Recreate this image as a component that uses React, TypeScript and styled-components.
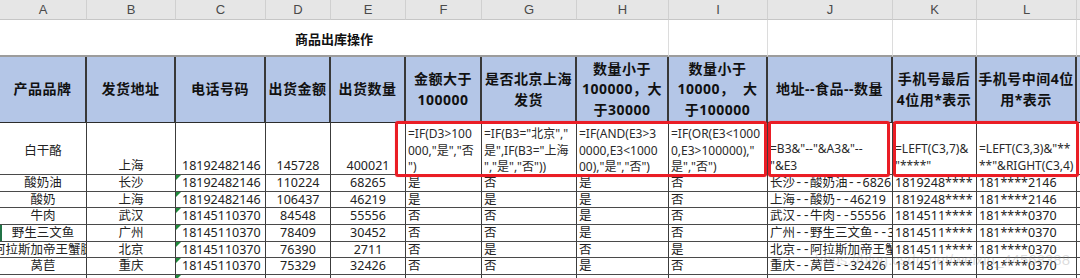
import React from 'react';
import styled, { createGlobalStyle } from 'styled-components';

const COLUMN_WIDTHS = [87, 89, 90, 65, 75, 76, 95, 92, 99, 125, 84, 100];
const COLUMN_NAMES = ['A', 'B', 'C', 'D', 'E', 'F', 'G', 'H', 'I', 'J', 'K', 'L'];

const FONT = `"Noto Sans", "Noto Sans CJK SC", sans-serif`;

type Align = 'left' | 'center';
type VAlign = 'top' | 'center' | 'bottom';

const HEADERS: string[][] = [
  ['产品品牌'],
  ['发货地址'],
  ['电话号码'],
  ['出货金额'],
  ['出货数量'],
  ['金额大于', '100000'],
  ['是否北京上海', '发货'],
  ['数量小于', '100000，大', '于30000'],
  ['数量小于', '10000，  大', '于100000'],
  ['地址--食品--数量'],
  ['手机号最后', '4位用*表示'],
  ['手机号中间4位', '用*表示'],
];

const FORMULAS: string[][] = [
  ['=IF(D3>100', '000,"是","否', '")'],
  ['=IF(B3="北京","', '是",IF(B3="上海', '","是","否"))'],
  ['=IF(AND(E3>3', '0000,E3<1000', '00),"是","否")'],
  ['=IF(OR(E3<1000', '0,E3>100000),"', '是","否")'],
  ['=B3&"--"&A3&"--', '"&E3'],
  ['=LEFT(C3,7)&', '"****"'],
  ['=LEFT(C3,3)&"**', '**"&RIGHT(C3,4)'],
];

type Item = {
  name: string;
  city: string;
  phone: string;
  amount: string;
  qty: string;
  flags: string[];
};

const ITEMS: Item[] = [
  { name: '酸奶油', city: '长沙', phone: '18192482146', amount: '110224', qty: '68265', flags: ['是', '否', '是', '否'] },
  { name: '酸奶', city: '上海', phone: '18192482146', amount: '106437', qty: '46219', flags: ['是', '是', '是', '否'] },
  { name: '牛肉', city: '武汉', phone: '18145110370', amount: '84548', qty: '55556', flags: ['否', '否', '是', '否'] },
  { name: '野生三文鱼', city: '广州', phone: '18145110370', amount: '78409', qty: '30452', flags: ['否', '否', '是', '否'] },
  { name: '阿拉斯加帝王蟹腿', city: '北京', phone: '18145110370', amount: '76390', qty: '2711', flags: ['否', '是', '否', '是'] },
  { name: '莴苣', city: '重庆', phone: '18145110370', amount: '75329', qty: '32426', flags: ['否', '否', '是', '否'] },
];

export default function App() {
  return (
    <>
      <GlobalStyle />
      <Sheet>
        {COLUMN_NAMES.map((c) => (
          <ColHead key={c}>{c}</ColHead>
        ))}
        <ColHead />

        <TitleCell>商品出库操作</TitleCell>
        {[0, 1, 2, 3].map((i) => (
          <TitleBlank key={i} />
        ))}
        <TitleBlank $last />

        {HEADERS.map((lines, i) => (
          <HeadCell key={i}>
            {lines.map((l, j) => (
              <HeadLine key={j}>{l}</HeadLine>
            ))}
          </HeadCell>
        ))}
        <HeadCell $last />

        <Cell $align="center" $valign="center" $padTop={5}>白干酪</Cell>
        <Cell $align="center" $valign="bottom">上海</Cell>
        <Cell $align="left" $valign="bottom" $pad={6}>18192482146</Cell>
        <Cell $align="center" $valign="bottom">145728</Cell>
        <Cell $align="center" $valign="bottom">400021</Cell>
        {FORMULAS.map((lines, i) => (
          <Cell key={i} $align="left" $valign={i < 4 ? 'top' : 'bottom'} $padTop={i < 4 ? 3 : 0}>
            <Formula>
              {lines.map((l, j) => (
                <FormulaLine key={j}>{l}</FormulaLine>
              ))}
            </Formula>
          </Cell>
        ))}
        <Cell $align="left" $valign="center" />

        {ITEMS.map((it, r) => (
          <React.Fragment key={r}>
            <Cell $align="center" $valign="center" $mark={r === 3}>{it.name}</Cell>
            <Cell $align="center" $valign="center">{it.city}</Cell>
            <Cell $align="left" $valign="center" $pad={6} $flag>{it.phone}</Cell>
            <Cell $align="center" $valign="center">{it.amount}</Cell>
            <Cell $align="center" $valign="center">{it.qty}</Cell>
            {it.flags.map((f, j) => (
              <Cell key={j} $align="left" $valign="center">{f}</Cell>
            ))}
            <Cell $align="left" $valign="center">
              {it.city}
              <Dash>--</Dash>
              {it.name}
              <Dash>--</Dash>
              {it.qty}
            </Cell>
            <Cell $align="left" $valign="center">{it.phone.slice(0, 7)}****</Cell>
            <Cell $align="left" $valign="center">
              {it.phone.slice(0, 3)}****{it.phone.slice(7)}
            </Cell>
            <Cell $align="left" $valign="center" />
          </React.Fragment>
        ))}

        {COLUMN_NAMES.map((c, i) => (
          <Cell key={c} $align="left" $valign="center" $flag={i === 2} />
        ))}
        <Cell $align="left" $valign="center" />

        <Highlight $col="6 / 10" $left={-11} $right={1} />
        <Highlight $col="10 / 11" $left={0} $right={3} />
        <Highlight $col="11 / 13" $left={0} $right={-2} />

        <Watermark>https://blog.csdn.net/weixin_44568388</Watermark>
      </Sheet>
    </>
  );
}

const GlobalStyle = createGlobalStyle`
  html, body {
    margin: 0;
    padding: 0;
    background: #ffffff;
    overflow: hidden;
  }
`;

const Sheet = styled.div`
  position: relative;
  display: grid;
  grid-template-columns: ${COLUMN_WIDTHS.map((w) => `${w}px`).join(' ')} 1fr;
  grid-template-rows: 20px 37px 66px 52px repeat(7, 16.7px);
  width: 1080px;
  height: 278px;
  overflow: hidden;
  font-family: ${FONT};
  color: #222;
`;

const ColHead = styled.div`
  display: flex;
  align-items: center;
  justify-content: center;
  background: #e6e6e6;
  color: #4a4a4a;
  font: 13px "Liberation Sans", sans-serif;
  border-right: 1px solid #d0d0d0;
  border-bottom: 1px solid #c6c6c6;
`;

const TitleCell = styled.div`
  grid-column: span 8;
  display: flex;
  align-items: center;
  justify-content: center;
  padding-top: 1px;
  font-size: 13px;
  font-weight: 700;
  color: #111;
  border-right: 1px solid #dcdcdc;
  border-bottom: 2px solid #9c9c9c;
`;

const TitleBlank = styled.div<{ $last?: boolean }>`
  border-right: ${({ $last }) => ($last ? 'none' : '1px solid #dcdcdc')};
  border-bottom: 2px solid #9c9c9c;
`;

const HeadCell = styled.div<{ $last?: boolean }>`
  display: flex;
  flex-direction: column;
  align-items: center;
  justify-content: center;
  background: #b4c6e7;
  border-right: ${({ $last }) => ($last ? 'none' : '2px solid #383838')};
  border-bottom: 1px solid #2c2c2c;
  font-size: 14px;
  font-weight: 700;
  letter-spacing: 0.5px;
  line-height: 20.5px;
  color: #111;
`;

const HeadLine = styled.span`
  white-space: pre;
`;

const Cell = styled.div<{
  $align: Align;
  $valign: VAlign;
  $pad?: number;
  $padTop?: number;
  $flag?: boolean;
  $mark?: boolean;
}>`
  position: relative;
  display: flex;
  justify-content: ${({ $align }) => ($align === 'center' ? 'center' : 'flex-start')};
  align-items: ${({ $valign }) =>
    $valign === 'top' ? 'flex-start' : $valign === 'bottom' ? 'flex-end' : 'center'};
  padding: ${({ $padTop = 0 }) => $padTop}px ${({ $pad = 2 }) => $pad}px 0;
  border-right: 1px solid #3c3c3c;
  border-bottom: 1px solid #4a4a4a;
  overflow: hidden;
  white-space: nowrap;
  font-size: 12.5px;
  line-height: 16px;
  box-shadow: ${({ $mark }) => ($mark ? 'inset 2px 0 0 #217346' : 'none')};

  &::before {
    content: '';
    display: ${({ $flag }) => ($flag ? 'block' : 'none')};
    position: absolute;
    top: 0;
    left: 0;
    border-top: 5px solid #1f8a3b;
    border-right: 5px solid transparent;
  }
`;

const Formula = styled.div`
  display: flex;
  flex-direction: column;
  font-size: 12px;
  line-height: 16.5px;
  color: #2a2a2a;
`;

const FormulaLine = styled.span`
  white-space: pre;
`;

const Dash = styled.span`
  font-family: "Liberation Mono", monospace;
`;

const Highlight = styled.div<{ $col: string; $left: number; $right: number }>`
  position: absolute;
  grid-row: 4 / 5;
  grid-column: ${({ $col }) => $col};
  top: -2px;
  bottom: -2px;
  left: ${({ $left }) => $left}px;
  right: ${({ $right }) => $right}px;
  border: 3px solid #ea1d25;
  border-radius: 3px;
  box-shadow: 0 0 1px rgba(234, 29, 37, 0.6);
  pointer-events: none;
`;

const Watermark = styled.div`
  position: absolute;
  top: 251px;
  right: 10px;
  font: 15px "Liberation Sans", sans-serif;
  color: rgba(140, 140, 140, 0.3);
  white-space: nowrap;
  pointer-events: none;
`;
